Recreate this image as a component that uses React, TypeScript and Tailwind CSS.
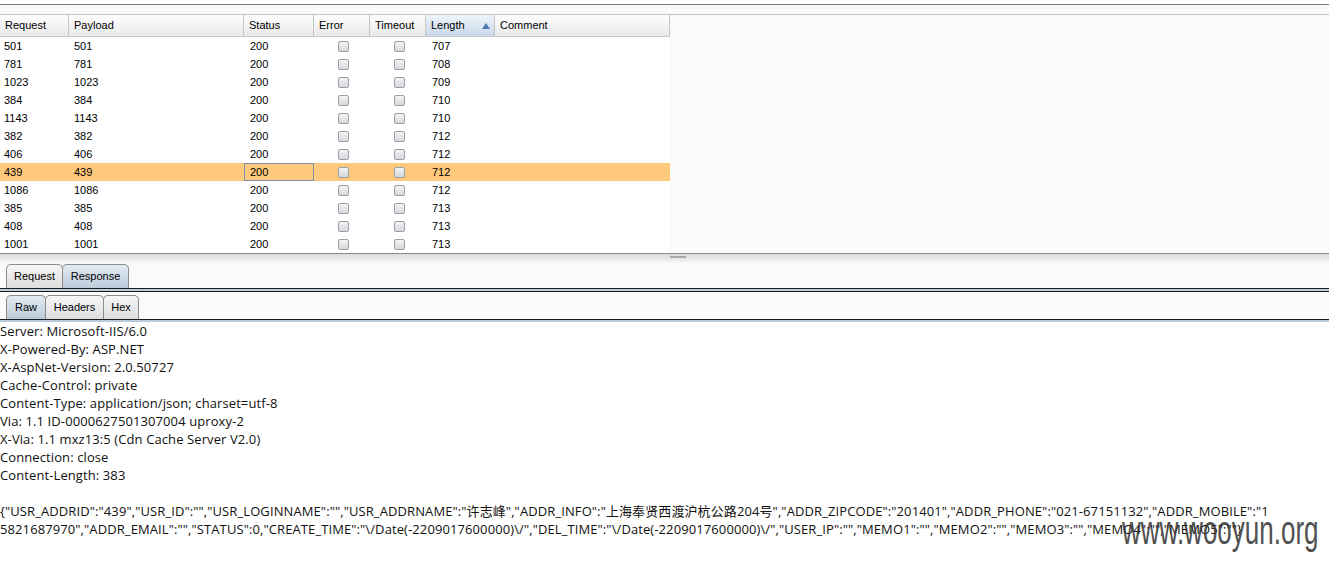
import React from "react";

const rows: [string, string, string][] = [
  ["501", "501", "707"],
  ["781", "781", "708"],
  ["1023", "1023", "709"],
  ["384", "384", "710"],
  ["1143", "1143", "710"],
  ["382", "382", "712"],
  ["406", "406", "712"],
  ["439", "439", "712"],
  ["1086", "1086", "712"],
  ["385", "385", "713"],
  ["408", "408", "713"],
  ["1001", "1001", "713"],
];

const cols = [
  { name: "Request", w: "w-[69px]" },
  { name: "Payload", w: "w-[175px]" },
  { name: "Status", w: "w-[70px]" },
  { name: "Error", w: "w-[56px]" },
  { name: "Timeout", w: "w-[56px]" },
  { name: "Length", w: "w-[69px]" },
  { name: "Comment", w: "w-[175px]" },
];

function Check() {
  return (
    <div className="w-[11px] h-[11px] rounded-[2px] border border-[#9aa0a8] bg-gradient-to-b from-[#f4f4f4] to-[#d6d8dc]" />
  );
}

function Tab({ label, active, w }: { label: string; active?: boolean; w: string }) {
  return (
    <div
      className={`${w} h-[24px] -mr-px flex items-center justify-center rounded-t-[5px] border border-b-0 border-[#8c8c8c] text-[11px] text-black ${
        active
          ? "bg-gradient-to-b from-[#e4ebf2] to-[#bccbda]"
          : "bg-gradient-to-b from-[#f6f6f6] to-[#dedede]"
      }`}
    >
      {label}
    </div>
  );
}

function TabLine() {
  return (
    <div className="w-full">
      <div className="h-px bg-[#1c1c1c]" />
      <div className="h-[2px] bg-[#bccbdc]" />
      <div className="h-px bg-[#1c1c1c]" />
    </div>
  );
}

const headers = [
  "Server: Microsoft-IIS/6.0",
  "X-Powered-By: ASP.NET",
  "X-AspNet-Version: 2.0.50727",
  "Cache-Control: private",
  "Content-Type: application/json; charset=utf-8",
  "Via: 1.1 ID-0000627501307004 uproxy-2",
  "X-Via: 1.1 mxz13:5 (Cdn Cache Server V2.0)",
  "Connection: close",
  "Content-Length: 383",
];

const json1 =
  '{"USR_ADDRID":"439","USR_ID":"","USR_LOGINNAME":"","USR_ADDRNAME":"许志峰","ADDR_INFO":"上海奉贤西渡沪杭公路204号","ADDR_ZIPCODE":"201401","ADDR_PHONE":"021-67151132","ADDR_MOBILE":"1';
const json2 =
  '5821687970","ADDR_EMAIL":"","STATUS":0,"CREATE_TIME":"\\/Date(-2209017600000)\\/","DEL_TIME":"\\/Date(-2209017600000)\\/","USER_IP":"","MEMO1":"","MEMO2":"","MEMO3":"","MEMO4":"","MEMO5":""}';

export default function App() {
  return (
    <div className="w-[1329px] h-[562px] overflow-hidden bg-white relative" style={{ fontFamily: '"Liberation Sans", Arial, sans-serif' }}>
      {/* top strip */}
      <div className="h-[4px] bg-white" />
      <div className="h-px bg-[#7a7a7a]" />
      <div className="h-[9px] bg-[#fafafa]" />
      <div className="h-px bg-[#c4c4c4]" />
      {/* table area */}
      <div className="flex h-[238px] bg-[#fafafa]">
        <div className="w-[670px] bg-white">
          <div className="flex h-[22px] border-b border-[#c8c8c8] bg-gradient-to-b from-[#fdfdfd] to-[#eaeaea] text-[11px] text-black">
            {cols.map((c) => (
              <div
                key={c.name}
                className={`${c.w} shrink-0 flex items-center pl-[5px] border-r border-[#c6c6c6] ${
                  c.name === "Length" ? "bg-gradient-to-b from-[#eef4fa] to-[#c9d9ea] justify-between pr-[4px]" : ""
                }`}
              >
                <span>{c.name}</span>
                {c.name === "Length" && (
                  <svg width="8" height="6" viewBox="0 0 8 6">
                    <path d="M4 0 L8 6 L0 6 Z" fill="#4a7ab0" />
                  </svg>
                )}
              </div>
            ))}
          </div>
          {rows.map((r, i) => {
            const sel = r[0] === "439";
            return (
              <div key={i} className={`flex h-[18px] text-[11px] text-black ${sel ? "bg-[#ffc97c]" : ""}`}>
                <div className="w-[69px] shrink-0 pl-[4px] flex items-center">{r[0]}</div>
                <div className="w-[175px] shrink-0 pl-[5px] flex items-center">{r[1]}</div>
                <div
                  className={`w-[70px] shrink-0 flex items-center ${
                    sel ? "border border-[#7d8fa6] pl-[5px]" : "pl-[6px]"
                  }`}
                >
                  200
                </div>
                <div className="w-[56px] shrink-0 flex items-center justify-center pl-[2px]">
                  <Check />
                </div>
                <div className="w-[56px] shrink-0 flex items-center justify-center pl-[2px]">
                  <Check />
                </div>
                <div className="w-[69px] shrink-0 pl-[6px] flex items-center">{r[2]}</div>
                <div className="flex-1" />
              </div>
            );
          })}
        </div>
        <div className="flex-1" />
      </div>
      {/* splitter */}
      <div className="h-px bg-[#8a8a8a]" />
      <div className="h-[8px] bg-gradient-to-b from-[#dcdcdc] to-[#f2f2f2] flex">
        <div className="w-[670px]" />
        <div className="w-[16px] h-[2px] mt-[2px] bg-[#a8a8a8]" />
      </div>
      {/* tabs */}
      <div className="bg-[#fafafa]">
        <div className="flex items-end h-[26px] pl-[6px]">
          <Tab label="Request" w="w-[57px]" />
          <Tab label="Response" w="w-[67px]" active />
        </div>
        <TabLine />
        <div className="flex items-end h-[27px] pl-[6px]">
          <Tab label="Raw" w="w-[40px]" active />
          <Tab label="Headers" w="w-[59px]" />
          <Tab label="Hex" w="w-[36px]" />
        </div>
        <TabLine />
      </div>
      {/* response body */}
      <div
        className="bg-white text-[13px] leading-[18px] text-[#111] -mt-[1px] whitespace-nowrap tracking-[0.1px]"
        style={{ fontFamily: '"Open Sans", "Noto Sans CJK SC", sans-serif' }}
      >
        {headers.map((h) => (
          <div key={h}>{h}</div>
        ))}
        <div className="h-[18px]" />
        <div>{json1}</div>
        <div>{json2}</div>
      </div>
      <div
        className="absolute left-[1122px] top-[510px] text-[40px] leading-[40px] text-[#333] opacity-85 scale-x-[0.65] origin-left whitespace-nowrap"
        style={{ fontFamily: '"Liberation Sans", Arial, sans-serif' }}
      >
        www.wooyun.org
      </div>
    </div>
  );
}
